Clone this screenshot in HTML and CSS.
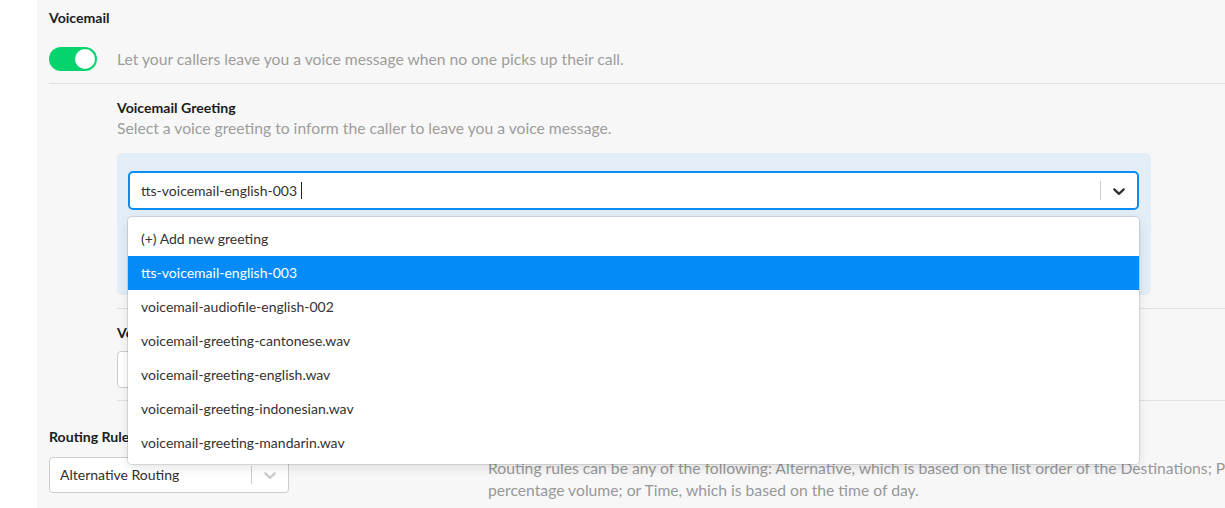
FILE: index.html
```html
<!DOCTYPE html>
<html lang="en">
<head>
<meta charset="utf-8">
<title>Voicemail settings</title>
<link rel="stylesheet" href="styles.css">
</head>
<body>
<div class="page">
  <aside class="rail"></aside>
  <main class="main">
    <section class="block">
      <h3 class="title">Voicemail</h3>
      <div class="toggle-row">
        <span class="toggle"><span class="knob"></span></span>
        <p class="muted">Let your callers leave you a voice message when no one picks up their call.</p>
      </div>
    </section>
    <hr class="rule">
    <div class="sub">
      <h4 class="title">Voicemail Greeting</h4>
      <p class="muted">Select a voice greeting to inform the caller to leave you a voice message.</p>
      <div class="greeting-box">
        <div class="select-wrap">
          <div class="control focused">
            <div class="value">tts-voicemail-english-003<span class="caret"></span></div>
            <span class="sep"></span>
            <span class="indicator">
              <svg viewBox="0 0 20 20" width="20" height="20" aria-hidden="true"><path d="M4.516 7.548c0.436-0.446 1.043-0.481 1.576 0l3.908 3.747 3.908-3.747c0.533-0.481 1.141-0.446 1.574 0 0.436 0.445 0.408 1.197 0 1.615-0.406 0.418-4.695 4.502-4.695 4.502-0.217 0.223-0.502 0.335-0.787 0.335s-0.57-0.112-0.789-0.335c0 0-4.287-4.084-4.695-4.502s-0.436-1.17 0-1.615z"/></svg>
            </span>
          </div>
          <div class="menu">
            <div class="option">(+) Add new greeting</div>
            <div class="option selected">tts-voicemail-english-003</div>
            <div class="option">voicemail-audiofile-english-002</div>
            <div class="option">voicemail-greeting-cantonese.wav</div>
            <div class="option">voicemail-greeting-english.wav</div>
            <div class="option">voicemail-greeting-indonesian.wav</div>
            <div class="option">voicemail-greeting-mandarin.wav</div>
          </div>
        </div>
      </div>
      <hr class="rule rule-sub">
      <h4 class="title label-gap">Voicemail Timeout</h4>
      <div class="field-input"></div>
      <hr class="rule rule-last">
    </div>
    <section class="routing">
      <h4 class="title">Routing Rules</h4>
      <div class="routing-row">
        <div class="control plain">
          <div class="value dark">Alternative Routing</div>
          <span class="sep"></span>
          <span class="indicator light">
            <svg viewBox="0 0 20 20" width="20" height="20" aria-hidden="true"><path d="M4.516 7.548c0.436-0.446 1.043-0.481 1.576 0l3.908 3.747 3.908-3.747c0.533-0.481 1.141-0.446 1.574 0 0.436 0.445 0.408 1.197 0 1.615-0.406 0.418-4.695 4.502-4.695 4.502-0.217 0.223-0.502 0.335-0.787 0.335s-0.57-0.112-0.789-0.335c0 0-4.287-4.084-4.695-4.502s-0.436-1.17 0-1.615z"/></svg>
          </span>
        </div>
        <p class="muted help">Routing rules can be any of the following: Alternative, which is based on the list order of the Destinations; Percentage, which is based on the<br>percentage volume; or Time, which is based on the time of day.</p>
      </div>
    </section>
  </main>
</div>
</body>
</html>
```

FILE: styles.css
```css
html, body {
  margin: 0;
  padding: 0;
}

body {
  font-family: Lato, "Open Sans", "Liberation Sans", sans-serif;
  background: #ffffff;
  overflow: hidden;
  width: 1225px;
  height: 508px;
}

.page {
  display: flex;
  min-height: 508px;
}

.rail {
  width: 37px;
  flex: none;
  background: #ffffff;
}

.main {
  flex: 1;
  min-width: 0;
  background: #f7f7f7;
  padding: 8px 0 0 12px;
}

.title {
  margin: 0;
  font-size: 14.1px;
  line-height: 20px;
  font-weight: 700;
  color: #1c1c1c;
}

.muted {
  margin: 0;
  font-size: 15.7px;
  line-height: 20px;
  color: #9d9d9d;
}

.toggle-row {
  display: flex;
  align-items: center;
  gap: 20px;
  margin-top: 19px;
}

.toggle {
  width: 48px;
  height: 24px;
  flex: none;
  box-sizing: border-box;
  border-radius: 12px;
  background: #05d46c;
  display: flex;
  align-items: center;
  justify-content: flex-end;
  padding: 0 2px;
}

.knob {
  width: 20px;
  height: 20px;
  border-radius: 50%;
  background: #ffffff;
}

.rule {
  border: 0;
  border-top: 1px solid #e1e1e1;
  margin: 12px 0 0;
  height: 0;
}

.rule-sub {
  margin-top: 13px;
}

.sub {
  margin-left: 68px;
  padding-top: 14px;
}

.greeting-box {
  margin-top: 15px;
  width: 1034px;
  box-sizing: border-box;
  background: #e3edf7;
  border-radius: 5px;
  padding: 18px 12px 85px 11px;
}

.select-wrap {
  position: relative;
}

.control {
  display: flex;
  align-items: center;
  box-sizing: border-box;
  background: #ffffff;
  border-radius: 5px;
}

.control.focused {
  height: 39px;
  border: 2px solid #0a8cf5;
}

.control.plain {
  width: 240px;
  height: 36px;
  flex: none;
  border: 1px solid #cccccc;
  border-radius: 4px;
}

.value {
  flex: 1;
  min-width: 0;
  padding: 0 11px;
  font-size: 14px;
  line-height: 20px;
  color: #333333;
  white-space: nowrap;
  display: flex;
  align-items: center;
}

.value.dark {
  padding: 0 10px;
  color: #2e2e2e;
}

.caret {
  display: inline-block;
  width: 1px;
  height: 17px;
  margin-left: 4px;
  background: #222222;
}

.sep {
  width: 1px;
  align-self: stretch;
  margin: 8px 0;
  background: #cccccc;
}

.indicator {
  width: 36px;
  display: flex;
  align-items: center;
  justify-content: center;
  fill: #333333;
}

.indicator.light {
  fill: #cccccc;
}

.menu {
  position: absolute;
  top: calc(100% + 7px);
  left: 0;
  right: 0;
  z-index: 5;
  background: #ffffff;
  border-radius: 4px;
  box-shadow: 0 0 0 1px rgba(0, 0, 0, 0.1), 0 4px 11px rgba(0, 0, 0, 0.1);
  padding: 5px 0 4px;
}

.option {
  height: 34px;
  line-height: 34px;
  padding: 0 13px;
  font-size: 14px;
  color: #333333;
  white-space: nowrap;
}

.option.selected {
  background: #058bf7;
  color: #ffffff;
}

.label-gap {
  margin-top: 14px;
}

.field-input {
  margin-top: 8px;
  width: 240px;
  height: 37px;
  box-sizing: border-box;
  background: #ffffff;
  border: 1px solid #cccccc;
  border-radius: 4px;
}

.rule-last {
  margin-top: 12px;
}

.routing {
  padding-top: 26px;
}

.routing-row {
  display: flex;
  align-items: flex-start;
  margin-top: 10px;
}

.help {
  margin-left: 199px;
  line-height: 22px;
  white-space: nowrap;
  color: #979797;
}
```
